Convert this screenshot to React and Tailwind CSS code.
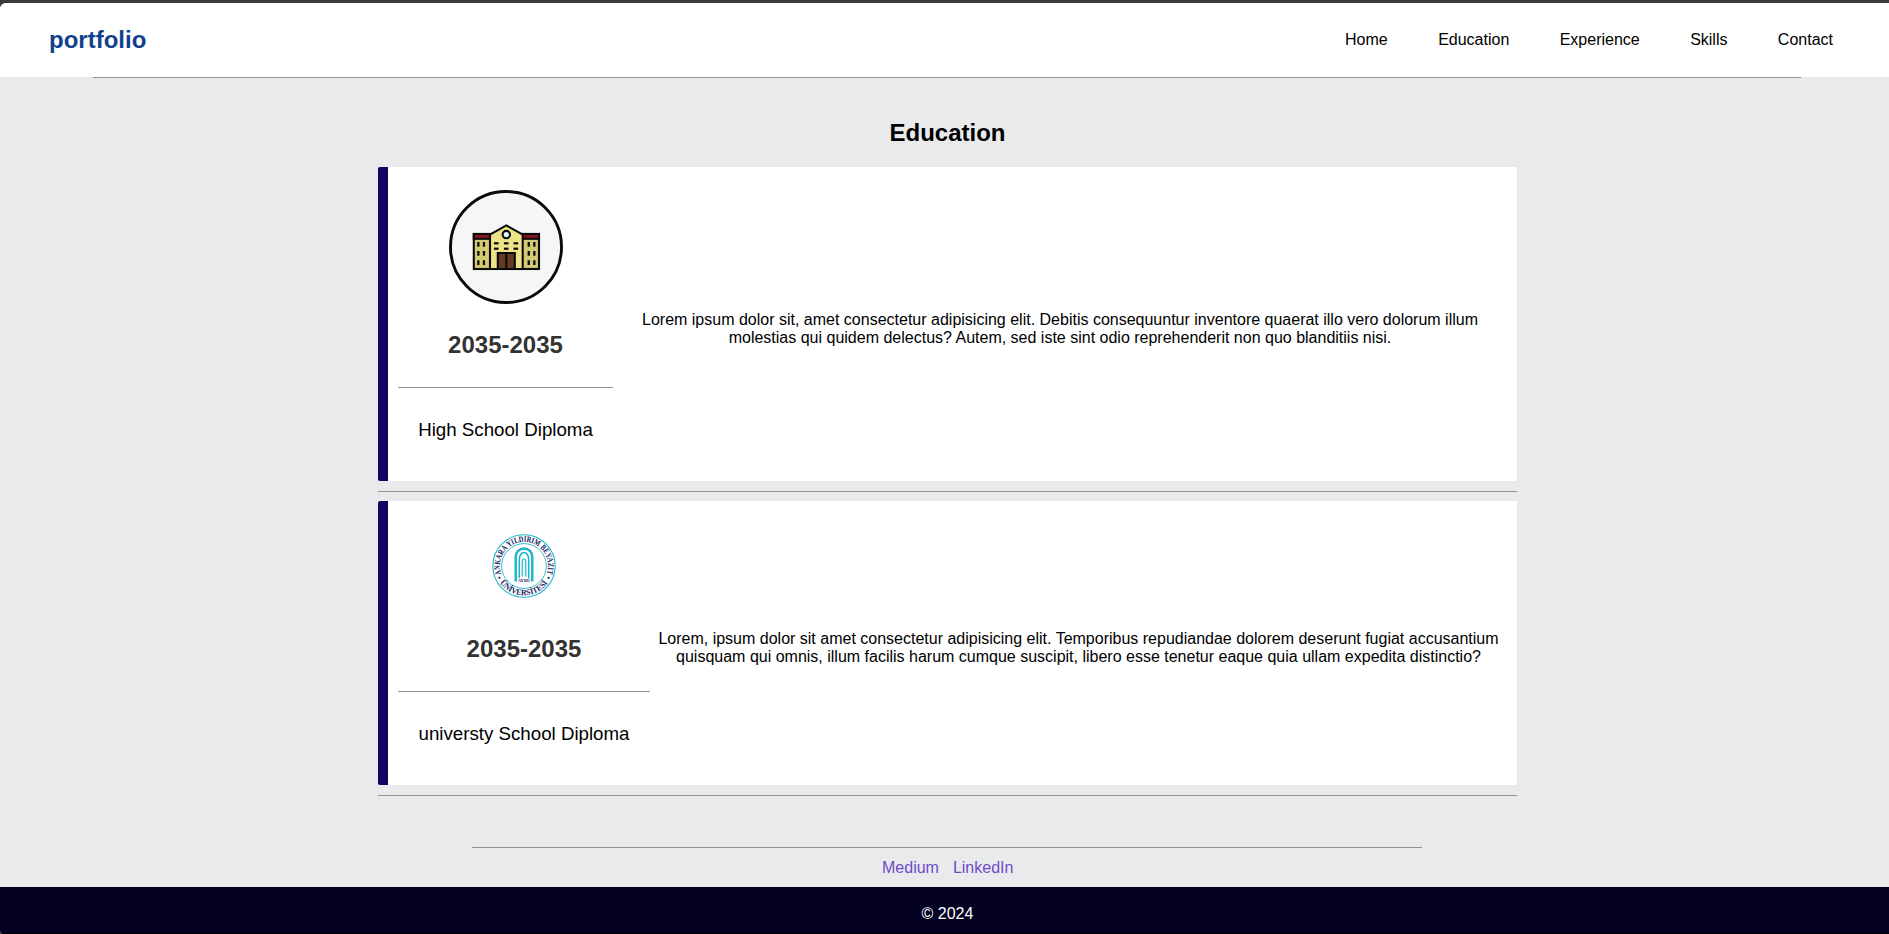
const NAV = ["Home", "Education", "Experience", "Skills", "Contact"];

function Rule({ className = "" }) {
  return <div className={`h-px shrink-0 bg-[#8f9193] ${className}`} />;
}

function WingWindows({ x }) {
  return [55, 64, 73.3].map((y) => (
    <g key={y} fill="#0c0b0c">
      <rect x={x} y={y} width="2.3" height="4.7" />
      <rect x={x + 5.6} y={y} width="2.3" height="4.7" />
    </g>
  ));
}

function SchoolBadge() {
  return (
    <svg width="120" height="120" viewBox="0 0 120 120" className="block shrink-0">
      <circle cx="60" cy="60" r="55.5" fill="#f6f6f7" stroke="#0a0a0a" strokeWidth="2.9" />
      <g stroke="#0c0b0c" strokeWidth="2.1" strokeLinejoin="miter">
        <rect x="27.8" y="47" width="65.2" height="35" fill="#d3ca73" />
        <rect x="27.8" y="47" width="65.2" height="4.8" fill="#8e1420" />
        <path d="M44 82V47.5L60.3 38.4L76.7 47.5V82Z" fill="#efe388" />
        <circle cx="60.3" cy="47.6" r="3.7" fill="#e4f5f6" />
        <path d="M51.8 82V66H68.8V82ZM60.3 66V82" fill="#643a20" />
      </g>
      <WingWindows x={31.2} />
      <WingWindows x={81.6} />
      <g fill="#0c0b0c">
        {[48, 57.9, 67.5].map((x) => (
          <g key={x}>
            <rect x={x} y="55.2" width="4.6" height="2.2" />
            <rect x={x} y="60.6" width="4.6" height="2.2" />
          </g>
        ))}
      </g>
    </svg>
  );
}

function UniversityBadge() {
  return (
    <svg width="64" height="64" viewBox="0 0 64 64" className="block shrink-0">
      <defs>
        <path id="arc-top" d="M9.7 41.1A24.1 24.1 0 1 1 54.3 41.1" />
        <path id="arc-bottom" d="M5.4 44.3A29.3 29.3 0 0 0 58.6 44.3" />
      </defs>
      <g fill="none" stroke="#1fb6c8">
        <circle cx="32" cy="32" r="31.2" strokeWidth="1.1" />
        <circle cx="32" cy="32" r="22.4" strokeWidth="0.9" />
        <path d="M23.7 47.5V23a8.3 8.5 0 0 1 16.6 0V47.5" strokeWidth="2.5" />
        <path d="M27.3 44V25a4.7 6.5 0 0 1 9.4 0V44" strokeWidth="1.6" />
        <path d="M30.2 42.5V28a1.8 3 0 0 1 3.6 0V42.5" strokeWidth="1.2" />
      </g>
      <g
        fill="#14215f"
        fontFamily="Liberation Serif, serif"
        fontWeight="700"
        fontSize="8.4"
      >
        <text>
          <textPath href="#arc-top" startOffset="1" textLength="92" lengthAdjust="spacingAndGlyphs">
            ANKARA YILDIRIM BEYAZIT
          </textPath>
        </text>
        <text>
          <textPath href="#arc-bottom" startOffset="5" textLength="56" lengthAdjust="spacingAndGlyphs">
            ÜNİVERSİTESİ
          </textPath>
        </text>
        <text x="32" y="47.7" fontSize="4.6" textAnchor="middle">AYBÜ</text>
        <circle cx="7.4" cy="43.8" r="1.1" />
        <circle cx="56.6" cy="43.8" r="1.1" />
      </g>
    </svg>
  );
}

function Card({ badge, years, title, text, cardClass, sideClass }) {
  return (
    <article className={`flex rounded-[2px] border-l-10 border-[#150462] bg-white px-2.5 ${cardClass}`}>
      <div className={`flex shrink-0 flex-col items-center ${sideClass}`}>
        {badge}
        <h3 className="text-2xl leading-7 font-bold text-[#333333]">{years}</h3>
        <Rule className="mt-7 w-full" />
        <p className="mt-[31px] text-[18.72px] leading-[22px] whitespace-nowrap">{title}</p>
      </div>
      <p className="flex-1 text-center leading-[18px]">{text}</p>
    </article>
  );
}

export default function App() {
  return (
    <div className="flex h-[934px] w-full flex-col overflow-hidden bg-[#3b3b3b] pt-[3px] font-['Liberation_Sans',Arial,sans-serif] text-base text-black">
      <div className="flex flex-1 flex-col overflow-hidden rounded-tl-[6px] rounded-bl-[4px] bg-[#e9eaec]">
        <header className="flex h-[74px] shrink-0 items-center justify-between bg-white pr-14 pl-[49px]">
          <div className="text-2xl leading-7 font-bold text-[#123f8c]">portfolio</div>
          <nav className="flex gap-[50.4px] leading-[18px]">
            {NAV.map((item) => (
              <a key={item}>{item}</a>
            ))}
          </nav>
        </header>
        <Rule className="ml-[93px] w-[1708px]" />

        <main className="ml-[378px] flex w-[1139px] shrink-0 flex-col">
          <h2 className="mt-[41px] mb-5 text-center text-2xl leading-7 font-bold">Education</h2>
          <Card
            badge={<SchoolBadge />}
            years="2035-2035"
            title="High School Diploma"
            text="Lorem ipsum dolor sit, amet consectetur adipisicing elit. Debitis consequuntur inventore quaerat illo vero dolorum illum molestias qui quidem delectus? Autem, sed iste sint odio reprehenderit non quo blanditiis nisi."
            cardClass="h-[314px] [&>p]:pt-36"
            sideClass="w-[215px] pt-5 [&>h3]:mt-6"
          />
          <Rule className="mt-2.5 mb-[9px] w-full" />
          <Card
            badge={<UniversityBadge />}
            years="2035-2035"
            title="universty School Diploma"
            text="Lorem, ipsum dolor sit amet consectetur adipisicing elit. Temporibus repudiandae dolorem deserunt fugiat accusantium quisquam qui omnis, illum facilis harum cumque suscipit, libero esse tenetur eaque quia ullam expedita distinctio?"
            cardClass="h-[284px] [&>p]:pt-[129px]"
            sideClass="w-[252px] pt-[33px] [&>h3]:mt-[37px]"
          />
          <Rule className="mt-2.5 w-full" />
        </main>

        <footer className="mt-[51px] flex flex-1 flex-col">
          <Rule className="ml-[472px] w-[950px]" />
          <div className="flex h-[39px] shrink-0 gap-3.5 pt-[11px] pl-[882px] leading-[18px] text-[#6f4bcb]">
            <a>Medium</a>
            <a>LinkedIn</a>
          </div>
          <div className="flex-1 border-b border-black bg-[#030021] pt-[18px] pl-[6px] text-center leading-[18px] text-white">
            © 2024
          </div>
        </footer>
      </div>
    </div>
  );
}
